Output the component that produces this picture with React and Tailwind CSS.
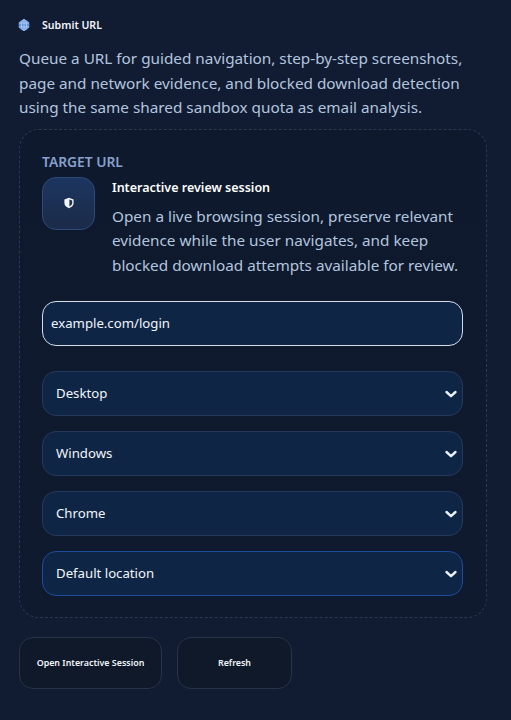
import { useState } from "react";

const font = { fontFamily: '"Noto Sans", sans-serif' };

const Chevron = () => (
  <svg
    viewBox="0 0 16 16"
    className="absolute right-[4px] top-1/2 h-[16px] w-[16px] -translate-y-1/2 pointer-events-none text-[#e8eef8]"
    fill="none"
    stroke="currentColor"
    strokeWidth="2.4"
    strokeLinecap="round"
    strokeLinejoin="round"
  >
    <path d="M3.5 6 8 10.2 12.5 6" />
  </svg>
);

const GlobeIcon = () => (
  <svg viewBox="0 0 12 12" className="h-[12px] w-[12px]">
    <circle cx="6" cy="6" r="5.5" fill="#5b8fe0" />
    <g fill="none" stroke="#c5d6f2" strokeWidth="0.8">
      <path d="M0.7 4h10.6M0.7 8h10.6M6 0.5v11" />
      <ellipse cx="6" cy="6" rx="2.6" ry="5.5" />
    </g>
  </svg>
);

const ShieldIcon = () => (
  <svg viewBox="0 0 12 12" className="h-[12px] w-[12px]">
    <path d="M6 .8 10.6 2.4V6c0 2.6-2 4.3-4.6 5.2-2.6-.9-4.6-2.6-4.6-5.2V2.4Z" fill="#f4f6fb" />
    <path d="M6.4 2.6 9.2 3.5V6c0 1.6-1.2 2.7-2.8 3.4Z" fill="#1c3358" />
  </svg>
);

const options = ["Desktop", "Windows", "Chrome", "Default location"];

export default function App() {
  const [url, setUrl] = useState("example.com/login");

  return (
    <div className="min-h-[720px] bg-[#111c33] px-[19px] pt-[17px]" style={font}>
      <div className="-ml-[1px] flex h-[16px] items-center gap-[12px]">
        <GlobeIcon />
        <h2 className="text-[10.6px] font-semibold leading-[16px] text-[#f1f5fb]">Submit URL</h2>
      </div>

      <p className="mt-[13px] w-[460px] text-[15.3px] leading-[24.5px] text-[#b3c5de]">
        Queue a URL for guided navigation, step-by-step screenshots, page and network evidence, and blocked download detection using the same shared sandbox quota as email analysis.
      </p>

      <section className="mt-[9px] h-[489px] w-[468px] rounded-[20px] border border-dashed border-[#2a3850] bg-gradient-to-b from-[#0e192d] to-[#101a2e] px-[22px] pt-[23px]">
        <div className="text-[13.8px] font-semibold leading-[18px] text-[#87a1cc]">TARGET URL</div>

        <div className="mt-[6px] flex gap-[17px]">
          <div className="flex h-[53px] w-[53px] shrink-0 items-center justify-center rounded-[14px] border border-[#2d4a78] bg-gradient-to-b from-[#1c3560] to-[#1b2b48]">
            <ShieldIcon />
          </div>
          <div className="pt-[1px]">
            <div className="text-[12.5px] font-semibold leading-[20px] text-white">Interactive review session</div>
            <p className="mt-[6px] text-[15.3px] leading-[24.5px] text-[#b3c5de]">
              Open a live browsing session, preserve relevant evidence while the user navigates, and keep blocked download attempts available for review.
            </p>
          </div>
        </div>

        <input
          value={url}
          onChange={(e) => setUrl(e.target.value)}
          className="mt-[24px] block h-[45px] w-[421px] rounded-[14px] border border-[#d5dde9] bg-[#0f2545] px-[8px] pb-[1px] text-[13.2px] text-[#f1f5fb] outline-none"
        />

        <div className="mt-[25px] flex w-[421px] flex-col gap-[15px]">
          {options.map((opt, i) => (
            <div key={opt} className="relative">
              <select
                defaultValue={opt}
                className={`block h-[45px] w-full appearance-none rounded-[14px] border bg-[#0f2545] px-[13px] pt-[1px] text-[13.2px] text-[#f1f5fb] outline-none ${
                  i === 3 ? "border-[#1d4c9c]" : "border-[#26395a]"
                }`}
              >
                <option>{opt}</option>
              </select>
              <Chevron />
            </div>
          ))}
        </div>
      </section>

      <div className="mt-[19px] flex gap-[15px]">
        <button className="h-[52px] w-[143px] rounded-[14px] border border-[#273346] bg-[#0f1929] text-[8.9px] font-semibold text-[#f1f5fb]">
          Open Interactive Session
        </button>
        <button className="h-[52px] w-[115px] rounded-[14px] border border-[#273346] bg-[#0f1929] text-[8.9px] font-semibold text-[#f1f5fb]">
          Refresh
        </button>
      </div>
    </div>
  );
}
